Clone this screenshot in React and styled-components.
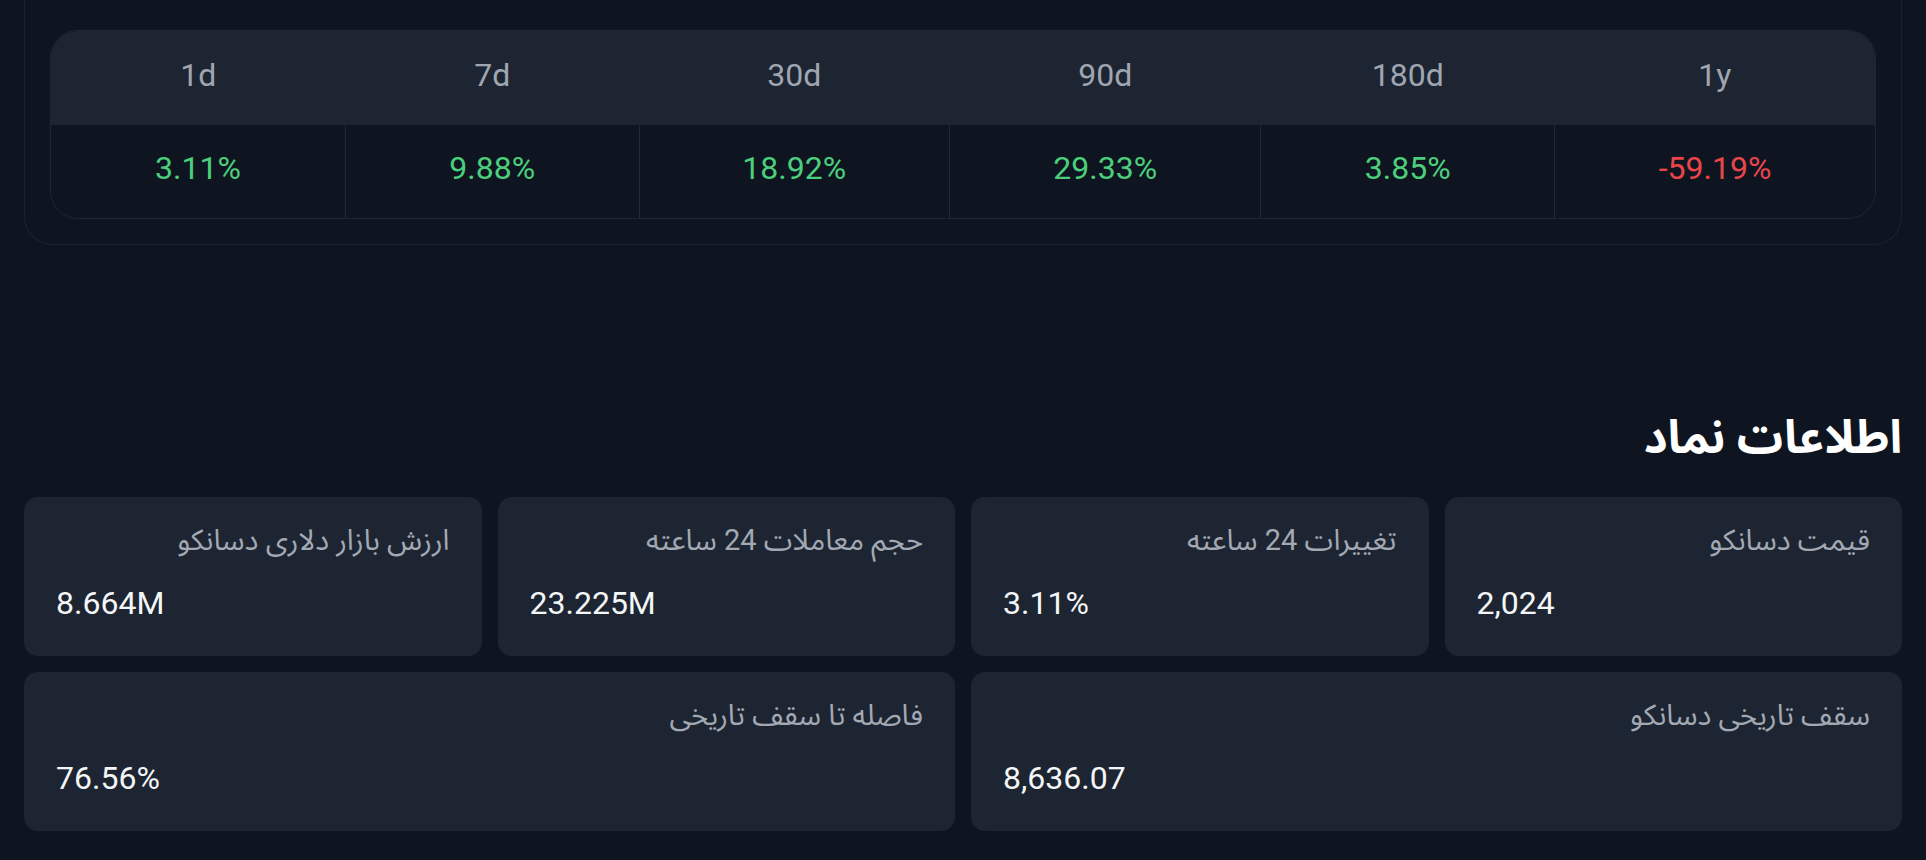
import React from 'react'
import styled, { createGlobalStyle } from 'styled-components'

const GlobalStyle = createGlobalStyle`
  * { box-sizing: border-box; }
  html, body {
    margin: 0;
    padding: 0;
    background: #0f1520;
  }
  body {
    font-family: Roboto, "Noto Sans Arabic", "DejaVu Sans", sans-serif;
    color: #f5f6f7;
    overflow: hidden;
  }
`

const Page = styled.div`
  direction: rtl;
  height: 860px;
  padding: 0 24px;
  background: #0f1520;
`

const Panel = styled.div`
  border: 1px solid #1c2330;
  border-top: none;
  border-radius: 0 0 28px 28px;
  padding: 30px 25px 25px;
`

const TableWrap = styled.div`
  direction: ltr;
  border: 1px solid #1f2733;
  border-radius: 28px;
  overflow: hidden;
`

const Table = styled.table`
  width: 100%;
  table-layout: fixed;
  border-collapse: collapse;
  border-spacing: 0;
`

const HeadCell = styled.th`
  height: 94px;
  padding: 0 0 6px;
  background: #1d2532;
  color: #a0a6b1;
  font-size: 32px;
  font-weight: 400;
  text-align: center;
  vertical-align: middle;
`

const Cell = styled.td`
  height: 93px;
  padding: 0 0 7px;
  text-align: center;
  vertical-align: middle;
  font-size: 32px;
  color: ${p => (p.$down ? '#e9464c' : '#4ccf7c')};
  border-left: 1px solid #222a36;
  &:first-child { border-left: none; }
`

const Title = styled.h2`
  margin: 163px 0 31px;
  font-size: 46px;
  line-height: 58px;
  font-weight: 700;
  color: #ffffff;
`

const Grid = styled.div`
  display: grid;
  grid-template-columns: repeat(4, 1fr);
  gap: 16px;
`

const Card = styled.div`
  grid-column: span ${p => p.$span || 1};
  background: #1d2532;
  border-radius: 14px;
  padding: 22px 32px 29px;
  display: flex;
  flex-direction: column;
  gap: 18px;
`

const Label = styled.div`
  font-size: 29px;
  line-height: 42px;
  color: #a3a9b3;
`

const Value = styled.div`
  direction: ltr;
  text-align: left;
  font-size: 32px;
  line-height: 48px;
  color: #f5f6f7;
`

const periods = [
  { label: '1d', value: '3.11%', w: 295 },
  { label: '7d', value: '9.88%', w: 294 },
  { label: '30d', value: '18.92%', w: 311 },
  { label: '90d', value: '29.33%', w: 312 },
  { label: '180d', value: '3.85%', w: 294 },
  { label: '1y', value: '-59.19%', w: 321 },
]

const total = periods.reduce((s, p) => s + p.w, 0)

const info = [
  { label: 'قیمت دسانکو', value: '2,024' },
  { label: 'تغییرات 24 ساعته', value: '3.11%' },
  { label: 'حجم معاملات 24 ساعته', value: '23.225M' },
  { label: 'ارزش بازار دلاری دسانکو', value: '8.664M' },
  { label: 'سقف تاریخی دسانکو', value: '8,636.07', span: 2 },
  { label: 'فاصله تا سقف تاریخی', value: '76.56%', span: 2 },
]

const App = () => {
  return (
    <Page>
      <GlobalStyle />
      <Panel>
        <TableWrap>
          <Table>
            <colgroup>
              {periods.map(p => (
                <col key={p.label} style={{ width: `${(p.w / total) * 100}%` }} />
              ))}
            </colgroup>
            <thead>
              <tr>
                {periods.map(p => <HeadCell key={p.label}>{p.label}</HeadCell>)}
              </tr>
            </thead>
            <tbody>
              <tr>
                {periods.map(p => (
                  <Cell key={p.label} $down={p.value.startsWith('-')}>{p.value}</Cell>
                ))}
              </tr>
            </tbody>
          </Table>
        </TableWrap>
      </Panel>

      <Title>اطلاعات نماد</Title>

      <Grid>
        {info.map(item => (
          <Card key={item.label} $span={item.span}>
            <Label>{item.label}</Label>
            <Value>{item.value}</Value>
          </Card>
        ))}
      </Grid>
    </Page>
  )
}

export default App
